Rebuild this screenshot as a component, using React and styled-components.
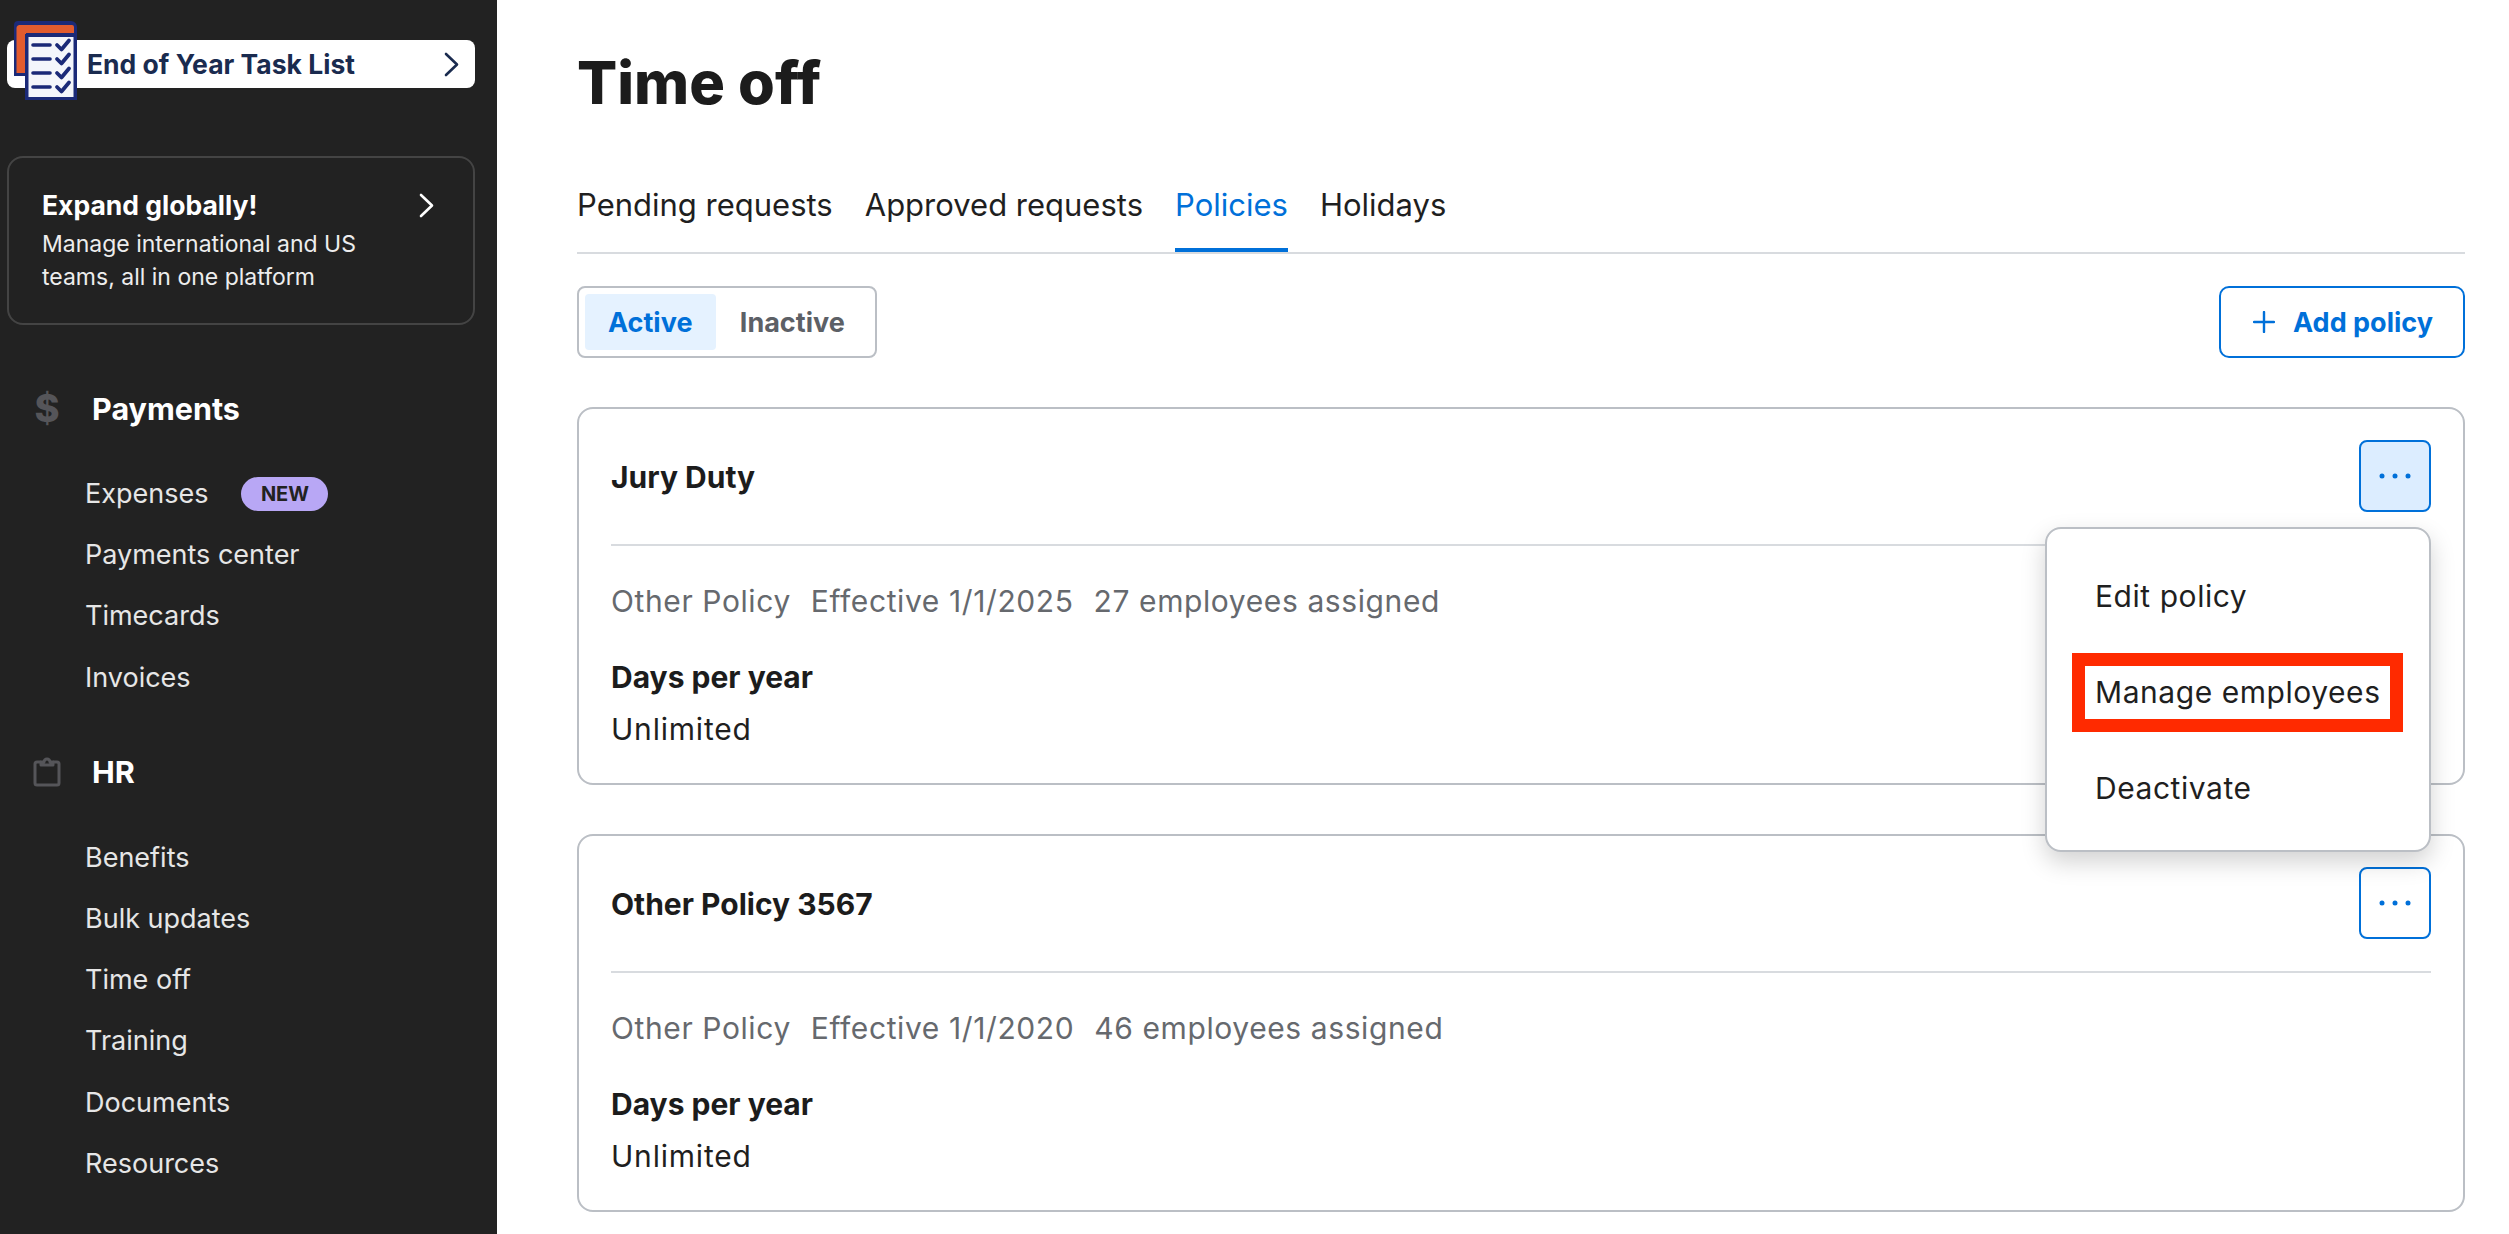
import styled, { createGlobalStyle } from "styled-components"

const GlobalStyle = createGlobalStyle`
  html, body {
    margin: 0;
    padding: 0;
    background: #fff;
    overflow: hidden;
  }
  * { box-sizing: border-box; }
  body {
    font-family: "Inter", "Liberation Sans", sans-serif;
    color: #1f1f1f;
  }
`

const Page = styled.div`
  display: flex;
  width: 2509px;
  height: 1234px;
  overflow: hidden;
`

const Sidebar = styled.aside`
  width: 497px;
  flex: none;
  background: #222222;
  padding: 40px 22px 0 7px;
`

const PromoBar = styled.div`
  position: relative;
  display: flex;
  align-items: center;
  justify-content: space-between;
  height: 48px;
  padding: 0 16px 0 80px;
  background: #fff;
  border-radius: 8px;
  color: #1a2b4f;
  font-size: 26.5px;
  font-weight: 700;
`

const PromoLogo = styled.svg`
  position: absolute;
  left: 6px;
  top: -20px;
  width: 64px;
  height: 80px;
`

const ExpandCard = styled.div`
  display: flex;
  justify-content: space-between;
  height: 169px;
  margin-top: 68px;
  padding: 29px 39px 0 33px;
  border: 2px solid #444444;
  border-radius: 16px;
  color: #fff;
`

const ExpandTitle = styled.div`
  font-size: 26.5px;
  font-weight: 700;
  line-height: 36px;
  margin-bottom: 5px;
`

const ExpandText = styled.div`
  font-size: 23px;
  line-height: 33px;
  color: #ededed;
`

const Chevron = styled.svg`
  width: 15px;
  height: 25px;
  flex: none;
  margin-top: ${(p) => p.$top || 0}px;
`

const NavHeader = styled.div`
  display: flex;
  align-items: center;
  height: 44px;
  margin-top: ${(p) => p.$top}px;
  margin-bottom: 48px;
  color: #fff;
  font-size: 30.5px;
  font-weight: 700;
`

const NavIcon = styled.div`
  display: flex;
  justify-content: center;
  width: 40px;
  margin-left: 20px;
  margin-right: 25px;
  color: #555559;
  font-size: 38px;
  font-weight: 800;
`

const NavItem = styled.div`
  display: flex;
  align-items: center;
  height: 61.2px;
  padding-left: 78px;
  margin-top: -15px;
  margin-bottom: 15px;
  color: #e6e6e6;
  font-size: 27px;
`

const NewPill = styled.span`
  display: inline-flex;
  align-items: center;
  justify-content: center;
  width: 87px;
  height: 34px;
  margin-left: 33px;
  border-radius: 17px;
  background: #b8a7f5;
  color: #222;
  font-size: 20px;
  font-weight: 700;
`

const Main = styled.main`
  flex: 1;
  padding: 0 44px 0 80px;
`

const Title = styled.h1`
  display: flex;
  align-items: center;
  height: 164px;
  margin: 0;
  font-size: 59.5px;
  font-weight: 800;
  color: #1c1c1c;
`

const Tabs = styled.nav`
  display: flex;
  gap: 32px;
  border-bottom: 2px solid #d8dbdf;
`

const Tab = styled.div`
  padding: 21px 0 23px;
  line-height: 40px;
  font-size: 31px;
  color: ${(p) => (p.$active ? "#0070d9" : "#1f1f1f")};
  border-bottom: 4px solid ${(p) => (p.$active ? "#0070d9" : "transparent")};
`

const Toolbar = styled.div`
  display: flex;
  justify-content: space-between;
  margin-top: 32px;
`

const Toggle = styled.div`
  display: flex;
  width: 300px;
  height: 72px;
  padding: 6px;
  border: 2px solid #bbbfc5;
  border-radius: 8px;
`

const ToggleOption = styled.div`
  display: flex;
  align-items: center;
  justify-content: center;
  width: ${(p) => (p.$active ? 131 : 154)}px;
  border-radius: 4px;
  font-size: 27px;
  font-weight: 700;
  background: ${(p) => (p.$active ? "#e5f2ff" : "transparent")};
  color: ${(p) => (p.$active ? "#0070d9" : "#5c6066")};
`

const AddButton = styled.button`
  display: flex;
  align-items: center;
  justify-content: center;
  gap: 18px;
  width: 246px;
  height: 72px;
  padding: 0 0 0 2px;
  background: #fff;
  border: 2.5px solid #0070d9;
  border-radius: 10px;
  color: #0070d9;
  font-family: inherit;
  font-size: 27px;
  font-weight: 700;
`

const Card = styled.section`
  height: 378px;
  margin-top: 49px;
  padding: 31px 32px 0;
  border: 2px solid #bbbfc5;
  border-radius: 16px;
`

const CardHeader = styled.div`
  position: relative;
  display: flex;
  align-items: center;
  justify-content: space-between;
  padding-bottom: 32px;
  border-bottom: 2px solid #d8dbdf;
`

const CardTitle = styled.div`
  position: relative;
  top: 1px;
  font-size: 30px;
  font-weight: 700;
  color: #1c1c1c;
`

const MoreButton = styled.button`
  display: flex;
  align-items: center;
  justify-content: center;
  width: 72px;
  height: 72px;
  padding: 0;
  border: 2.5px solid #0070d9;
  border-radius: 8px;
  background: ${(p) => (p.$open ? "#dcedff" : "#fff")};
`

const Meta = styled.div`
  display: flex;
  gap: 20px;
  margin-top: 35px;
  line-height: 40px;
  font-size: 30px;
  letter-spacing: 0.6px;
  color: #66696e;
`

const FieldLabel = styled.div`
  margin-top: 36px;
  line-height: 40px;
  font-size: 30px;
  font-weight: 700;
  color: #1c1c1c;
`

const FieldValue = styled.div`
  margin-top: 12px;
  line-height: 40px;
  font-size: 30px;
  letter-spacing: 0.8px;
  color: #1f1f1f;
`

const Menu = styled.div`
  position: absolute;
  top: 87px;
  right: 0;
  z-index: 2;
  width: 386px;
  height: 325px;
  padding-top: 19px;
  background: #fff;
  border: 2px solid #bbbfc5;
  border-radius: 16px;
  box-shadow: 0 10px 24px rgba(0, 0, 0, 0.18);
`

const MenuItem = styled.div`
  position: relative;
  display: flex;
  align-items: center;
  height: 96px;
  padding-left: 48px;
  font-size: 30px;
  letter-spacing: 0.55px;
  color: #1f1f1f;
`

const Highlight = styled.span`
  position: absolute;
  left: 25px;
  top: 9px;
  width: 331px;
  height: 79px;
  border: 13px solid #ff2a00;
`

const ChevronIcon = ({ color, top }) => (
  <Chevron $top={top} viewBox="0 0 15 25" fill="none" stroke={color} strokeWidth="2.6" strokeLinecap="round" strokeLinejoin="round">
    <path d="M2 2l11 10.5L2 23" />
  </Chevron>
)

const Dots = () => (
  <svg width="32" height="6" viewBox="0 0 32 6" fill="#0070d9">
    <circle cx="3" cy="3" r="2.5" />
    <circle cx="16" cy="3" r="2.5" />
    <circle cx="29" cy="3" r="2.5" />
  </svg>
)

const Plus = () => (
  <svg width="22" height="22" viewBox="0 0 22 22" stroke="#0070d9" strokeWidth="2.4" strokeLinecap="round">
    <path d="M11 1v20M1 11h20" />
  </svg>
)

const ClipboardIcon = () => (
  <svg width="28" height="30" viewBox="0 0 28 30" fill="none" stroke="#555559" strokeWidth="3" strokeLinejoin="round">
    <path d="M8 5H4a2 2 0 0 0-2 2v19a2 2 0 0 0 2 2h20a2 2 0 0 0 2-2V7a2 2 0 0 0-2-2h-4" />
    <path d="M8 8V5h3a3 3 0 0 1 6 0h3v3z" />
  </svg>
)

const checkRows = [25, 39, 53, 67]

const TaskLogo = () => (
  <PromoLogo viewBox="0 0 64 80">
    <path d="M5 1h53a6 6 0 0 1 6 6v10H14v39H1V5a4 4 0 0 1 4-4z" fill="#1b2a78" />
    <path d="M7 5h52a2 2 0 0 1 2 2v6H13v40H3.5V8a3 3 0 0 1 3.5-3z" fill="#e25c2e" />
    <rect x="12" y="14" width="52" height="66" fill="#1b2a78" />
    <rect x="15.5" y="17" width="45" height="60" fill="#f4f6fb" />
    {checkRows.map((y) => (
      <g key={y} fill="none" stroke="#1b2a78" strokeLinecap="round" strokeLinejoin="round">
        <path d={`M20 ${y}h17`} strokeWidth="3.6" />
        <path d={`M44 ${y}l4.5 4.5 7.5-9`} strokeWidth="3.8" />
      </g>
    ))}
  </PromoLogo>
)

const policies = [
  { name: "Jury Duty", effective: "Effective 1/1/2025", assigned: "27 employees assigned", open: true },
  { name: "Other Policy 3567", effective: "Effective 1/1/2020", assigned: "46 employees assigned", open: false },
]

const paymentItems = ["Expenses", "Payments center", "Timecards", "Invoices"]
const hrItems = ["Benefits", "Bulk updates", "Time off", "Training", "Documents", "Resources"]

const App = () => {
  return (
    <Page>
      <GlobalStyle />
      <Sidebar>
        <PromoBar>
          <TaskLogo />
          End of Year Task List
          <ChevronIcon color="#1a2b4f" />
        </PromoBar>
        <ExpandCard>
          <div>
            <ExpandTitle>Expand globally!</ExpandTitle>
            <ExpandText>Manage international and US<br />teams, all in one platform</ExpandText>
          </div>
          <ChevronIcon color="#fff" top={6} />
        </ExpandCard>
        <NavHeader $top={61}>
          <NavIcon>$</NavIcon>
          Payments
        </NavHeader>
        {paymentItems.map((item) => (
          <NavItem key={item}>
            {item}
            {item === "Expenses" && <NewPill>NEW</NewPill>}
          </NavItem>
        ))}
        <NavHeader $top={42}>
          <NavIcon><ClipboardIcon /></NavIcon>
          HR
        </NavHeader>
        {hrItems.map((item) => (
          <NavItem key={item}>{item}</NavItem>
        ))}
      </Sidebar>
      <Main>
        <Title>Time off</Title>
        <Tabs>
          <Tab>Pending requests</Tab>
          <Tab>Approved requests</Tab>
          <Tab $active>Policies</Tab>
          <Tab>Holidays</Tab>
        </Tabs>
        <Toolbar>
          <Toggle>
            <ToggleOption $active>Active</ToggleOption>
            <ToggleOption>Inactive</ToggleOption>
          </Toggle>
          <AddButton><Plus />Add policy</AddButton>
        </Toolbar>
        {policies.map((policy) => (
          <Card key={policy.name}>
            <CardHeader>
              <CardTitle>{policy.name}</CardTitle>
              <MoreButton $open={policy.open}><Dots /></MoreButton>
              {policy.open && (
                <Menu>
                  <MenuItem>Edit policy</MenuItem>
                  <MenuItem>Manage employees<Highlight /></MenuItem>
                  <MenuItem>Deactivate</MenuItem>
                </Menu>
              )}
            </CardHeader>
            <Meta>
              <span>Other Policy</span>
              <span>{policy.effective}</span>
              <span>{policy.assigned}</span>
            </Meta>
            <FieldLabel>Days per year</FieldLabel>
            <FieldValue>Unlimited</FieldValue>
          </Card>
        ))}
      </Main>
    </Page>
  )
}

export default App
